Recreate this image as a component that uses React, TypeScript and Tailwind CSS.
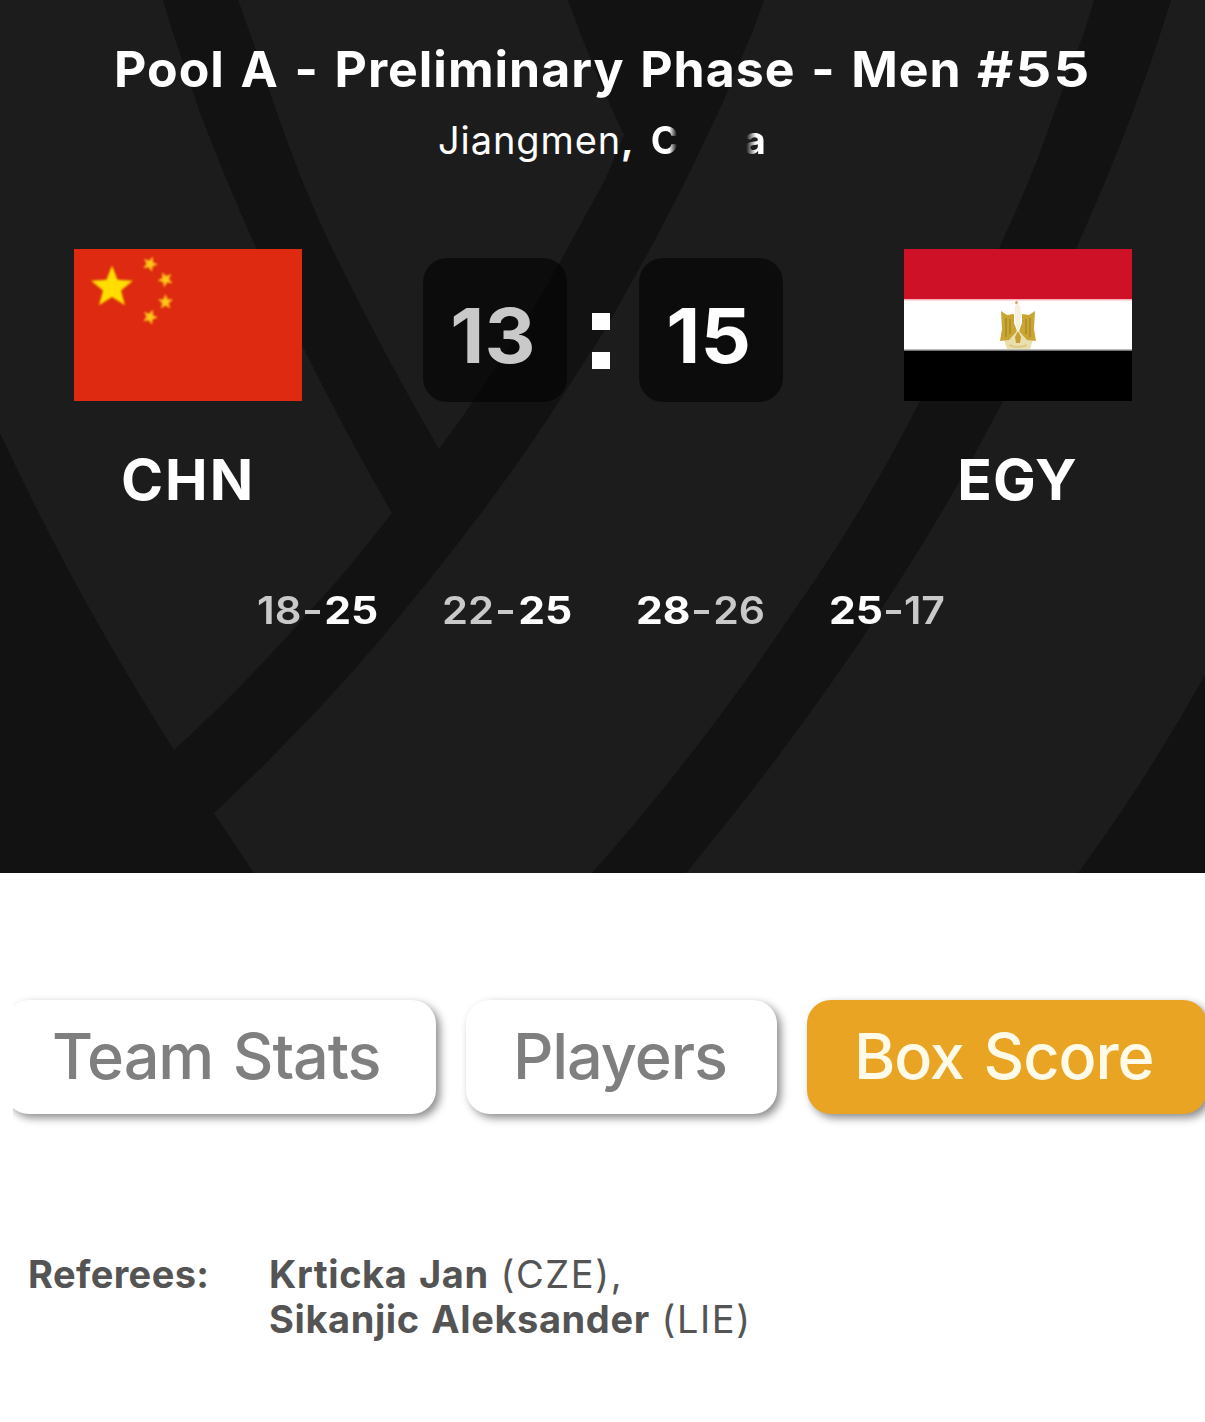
function Star({ x, y, r, rot = 0, fill }: { x: number; y: number; r: number; rot?: number; fill: string }) {
  const pts = Array.from({ length: 10 }, (_, i) => {
    const a = ((i * 36 - 90 + rot) * Math.PI) / 180;
    const d = i % 2 ? r * 0.43 : r;
    return `${(x + d * Math.cos(a)).toFixed(2)},${(y + d * Math.sin(a)).toFixed(2)}`;
  }).join(" ");
  return <polygon points={pts} fill={fill} />;
}

function Backdrop() {
  return (
    <svg className="absolute inset-0 h-full w-full" viewBox="0 0 1205 873" fill="#121212" aria-hidden="true">
      <path d="M163 0L172 30L199 110Q226 181 257 250L302 345Q345 432 392 513Q366 547 338 580L284 640Q231 698 174 750Q75 595 0 433V873H254L214 813Q305 728 380 640L429 580Q493 501 547 420L605 330L655 240L686 180L724 100L753 30L764 0H568Q593 70 624 135L605 180L572 240Q514 348 439 449Q382 352 328 240Q298 175 276 110L249 30L238 0Z" />
      <path d="M1094 0L1085 30L1055 110Q1035 171 1005 235Q966 322 918 405Q870 499 815 580L774 640Q689 764 592 873H686Q779 761 861 640L900 580Q954 496 1001 405Q1045 323 1082 235Q1137 112 1171 0Z" />
      <path d="M1205 675Q1147 779 1078 873H1205Z" />
    </svg>
  );
}

function FlagChina() {
  return (
    <svg className="h-[152px] w-[228px]" viewBox="0 0 228 152" role="img" aria-label="China">
      <rect width="228" height="152" fill="#dd2a10" />
      <g className="blur-[0.8px]">
        <Star x={38} y={38.5} r={22} fill="#ffde00" />
        <Star x={76} y={15} r={8} rot={22} fill="#ffc61a" />
        <Star x={91.5} y={30.5} r={8} rot={46} fill="#ffc61a" />
        <Star x={91.5} y={53} r={8} rot={0} fill="#ffc61a" />
        <Star x={76} y={68} r={8} rot={22} fill="#ffc61a" />
      </g>
    </svg>
  );
}

function FlagEgypt() {
  return (
    <svg className="h-[152px] w-[228px]" viewBox="0 0 228 152" role="img" aria-label="Egypt">
      <rect width="228" height="152" fill="#fff" />
      <rect width="228" height="50" fill="#ce1126" />
      <rect y="50" width="228" height="1.5" fill="#f3b4bb" />
      <rect y="100.5" width="228" height="2" fill="#777" />
      <rect y="102" width="228" height="50" fill="#000" />
      <g className="blur-[0.6px]">
        <path d="M100 91L109 83H120L129 91L126 100H103Z" fill="#eadfae" />
        <path d="M97 62L103 66L110 65V74L113 82L105 91L96 92L98 80ZM131 62L125 66L118 65V74L115 82L123 91L132 92L130 80Z" fill="#c9a634" />
        <path d="M102 69V88M106 70V85M126 69V88M122 70V85" stroke="#a98522" strokeWidth="1.3" />
        <path d="M111 57L113 54L116 57L117 67L115 82H113L111 67Z" fill="#f5efdc" />
        <path d="M114 82L117 88L116 94H112L111 88Z" fill="#c49f32" />
        <path d="M105 96Q114 100 123 96" stroke="#dccb88" strokeWidth="2" fill="none" />
        <circle cx="112.5" cy="53.5" r="1.5" fill="#e2a060" />
      </g>
    </svg>
  );
}

function ScoreBox({ value, won }: { value: string; won: boolean }) {
  return (
    <div className="flex h-36 w-36 items-center justify-center rounded-3xl bg-black/55 pt-[10px] pr-[4px]">
      <span className={won ? "scale-x-104 text-[76px] leading-none font-bold text-white" : "scale-x-104 text-[76px] leading-none font-bold text-[#c9c9c9]"}>{value}</span>
    </div>
  );
}

const sets = [
  { home: "18", away: "25", width: "w-[121px]" },
  { home: "22", away: "25", width: "w-[130px]" },
  { home: "28", away: "26", width: "w-[129px]" },
  { home: "25", away: "17", width: "w-[116px]" },
];

function SetScore({ home, away, width }: { home: string; away: string; width: string }) {
  const homeWon = Number(home) > Number(away);
  return (
    <div className={`${width} flex items-center justify-between`}>
      <span className={homeWon ? "origin-left scale-x-112 font-bold text-white" : "origin-left scale-x-110 font-semibold text-[#c9c9c9]"}>{home}</span>
      <span className={homeWon ? "mt-1 ml-[2px] h-1 w-[15px] bg-[#c9c9c9]" : "mt-1 mr-[2px] h-1 w-[15px] bg-[#c9c9c9]"} />
      <span className={homeWon ? "origin-right scale-x-108 font-semibold text-[#c9c9c9]" : "origin-right scale-x-112 font-bold text-white"}>{away}</span>
    </div>
  );
}

const tabBase = "flex h-[114px] shrink-0 items-center rounded-3xl pb-[2px] text-[63px] leading-none font-[480] tracking-[-1.1px] [word-spacing:4px] whitespace-nowrap shadow-[4px_4px_8px_rgba(0,0,0,0.45)]";

function Referee({ name, country, last }: { name: string; country: string; last?: boolean }) {
  return (
    <div className="whitespace-nowrap">
      <b className="tracking-[0.6px] [word-spacing:2px]">{name}</b>{" "}
      <span className="ml-px tracking-[1.6px]">({country}){last ? "" : ","}</span>
    </div>
  );
}

export default function App() {
  return (
    <main className="h-[1422px] w-[1205px] overflow-hidden bg-white font-[Inter,sans-serif]">
      <section className="relative h-[873px] overflow-hidden bg-[#1c1c1c] text-white">
        <Backdrop />
        <div className="relative flex flex-col">
          <h1 className="mt-[39px] ml-[114px] h-[61px] text-[50px] leading-[60px] font-bold tracking-[1px] [word-spacing:2.8px] whitespace-nowrap">
            Pool A - Preliminary Phase - Men <span className="inline-block origin-left scale-x-112 tracking-[2px]">#55</span>
          </h1>
          <div className="mt-[16px] flex h-12 items-center pl-[438px] text-[38px] leading-none whitespace-nowrap">
            <span className="tracking-[0.9px]">Jiangmen<b>,</b></span>
            <span className="ml-[16px] w-[26px] mask-r-from-70% mask-r-to-100% font-bold">C</span>
            <span className="ml-[67px] mask-l-from-45% mask-l-to-90% font-bold">a</span>
          </div>

          <div className="mt-[85px] flex justify-between pr-[73px] pl-[74px]">
            <div className="flex w-[228px] flex-col items-center">
              <FlagChina />
              <span className="mt-[47px] text-[57px] leading-[64px] font-bold tracking-[2px]">CHN</span>
            </div>
            <div className="mt-[9px] flex h-36 items-center">
              <ScoreBox value="13" won={false} />
              <div className="flex w-18 flex-col items-center gap-[22px] pt-[22px] pr-[4px]">
                <span className="h-[17px] w-[18px] bg-white" />
                <span className="h-[17px] w-[18px] bg-white" />
              </div>
              <ScoreBox value="15" won />
            </div>
            <div className="flex w-[228px] flex-col items-center">
              <FlagEgypt />
              <span className="mt-[47px] pr-px text-[57px] leading-[64px] font-bold tracking-[1px]">EGY</span>
            </div>
          </div>

          <div className="mt-[79px] flex gap-16 pl-[257px] text-[38px] leading-[38px]">
            {sets.map((s, i) => <SetScore key={i} {...s} />)}
          </div>
        </div>
      </section>

      <nav className="mt-[107px] ml-[13px] flex h-[160px] gap-[30px] overflow-hidden pt-5 text-[#7f7f7f]">
        <button className={`${tabBase} -ml-[8px] w-[431px] pl-[47px]`}>Team Stats</button>
        <button className={`${tabBase} w-[311px] pl-[47px]`}>Players</button>
        <button className={`${tabBase} w-[400px] bg-[#eaa424] pl-[47px] text-[#fffbe8]`}>Box Score</button>
      </nav>

      <section className="mt-[112px] flex pl-[28px] text-[38px] leading-[45px] text-[#545454]">
        <div className="w-[241px] font-bold tracking-[0.4px]">Referees:</div>
        <div>
          <Referee name="Krticka Jan" country="CZE" />
          <Referee name="Sikanjic Aleksander" country="LIE" last />
        </div>
      </section>
    </main>
  );
}
